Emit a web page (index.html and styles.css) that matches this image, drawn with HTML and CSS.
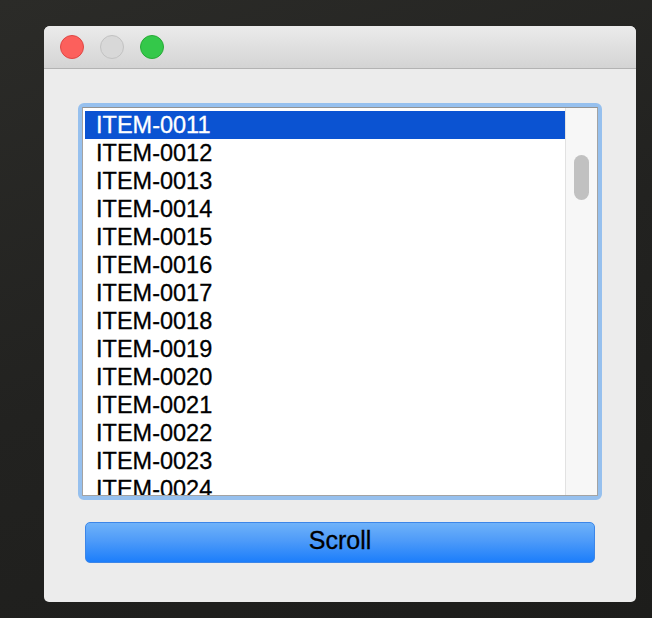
FILE: index.html
```html
<!DOCTYPE html>
<html>
<head>
<meta charset="utf-8">
<link rel="stylesheet" href="styles.css">
</head>
<body>
<div class="window">
  <div class="titlebar">
    <span class="light red"></span>
    <span class="light gray"></span>
    <span class="light green"></span>
  </div>
  <div class="content">
    <div class="ring">
      <div class="list">
        <div class="rows">
          <div class="row selected">ITEM-0011</div>
          <div class="row">ITEM-0012</div>
          <div class="row">ITEM-0013</div>
          <div class="row">ITEM-0014</div>
          <div class="row">ITEM-0015</div>
          <div class="row">ITEM-0016</div>
          <div class="row">ITEM-0017</div>
          <div class="row">ITEM-0018</div>
          <div class="row">ITEM-0019</div>
          <div class="row">ITEM-0020</div>
          <div class="row">ITEM-0021</div>
          <div class="row">ITEM-0022</div>
          <div class="row">ITEM-0023</div>
          <div class="row">ITEM-0024</div>
        </div>
        <div class="scrollbar"><div class="thumb"></div></div>
      </div>
    </div>
    <button class="btn">Scroll</button>
  </div>
</div>
</body>
</html>
```
FILE: styles.css
```css
html, body {
  margin: 0;
  padding: 0;
}
body {
  width: 652px;
  height: 618px;
  background: linear-gradient(160deg, #2b2b28 0%, #222220 50%, #1d1d1b 100%);
  font-family: "Liberation Sans", Arial, sans-serif;
  overflow: hidden;
}
.window {
  margin: 26px 0 0 44px;
  width: 592px;
  height: 576px;
  background: #ececec;
  border-radius: 6px 6px 5px 5px;
  overflow: hidden;
  display: flex;
  flex-direction: column;
}
.titlebar {
  height: 42px;
  border-bottom: 1px solid #b3b3b3;
  background: linear-gradient(#ebebeb, #d4d4d4);
  display: flex;
  align-items: center;
  padding-left: 16px;
  gap: 16px;
}
.light {
  width: 24px;
  height: 24px;
  border-radius: 50%;
  box-sizing: border-box;
}
.red { background: #fc605c; border: 1px solid #df4744; }
.gray { background: #d8d8d8; border: 1px solid #c2c2c2; }
.green { background: #34c84a; border: 1px solid #27aa36; }
.content {
  padding: 34px 34px 0 34px;
  display: flex;
  flex-direction: column;
}
.ring {
  height: 397px;
  border: 4px solid #96c0ee;
  border-radius: 6px;
  box-sizing: border-box;
  display: flex;
}
.list {
  flex: 1;
  border: 1px solid #a3a3a3;
  border-top-color: #939393;
  background: #fff;
  display: flex;
  overflow: hidden;
}
.rows {
  flex: 1;
  padding: 3px 0 0 2px;
  overflow: hidden;
}
.row {
  height: 28px;
  line-height: 29px;
  font-size: 23.5px;
  padding-left: 11px;
  color: #000;
  white-space: nowrap;
  -webkit-text-stroke: 0.3px #000;
}
.row.selected {
  background: #0b53d2;
  color: #fff;
  -webkit-text-stroke: 0.3px #fff;
}
.scrollbar {
  width: 31px;
  background: #f7f7f7;
  border-left: 1px solid #e2e2e2;
  padding-top: 47px;
  display: flex;
  justify-content: center;
}
.thumb {
  width: 15px;
  height: 45px;
  border-radius: 8px;
  background: #c1c1c1;
}
.btn {
  margin: 22px 7px 0 7px;
  height: 41px;
  border: 1px solid #3c86e8;
  border-radius: 5px;
  background: linear-gradient(#6fb2f9 0%, #4e9bf9 45%, #1c7efb 100%);
  font-family: "Liberation Sans", Arial, sans-serif;
  font-size: 25px;
  color: #000;
  padding: 0 0 5px 0;
  line-height: 30px;
  -webkit-text-stroke: 0.3px #000;
}
```
